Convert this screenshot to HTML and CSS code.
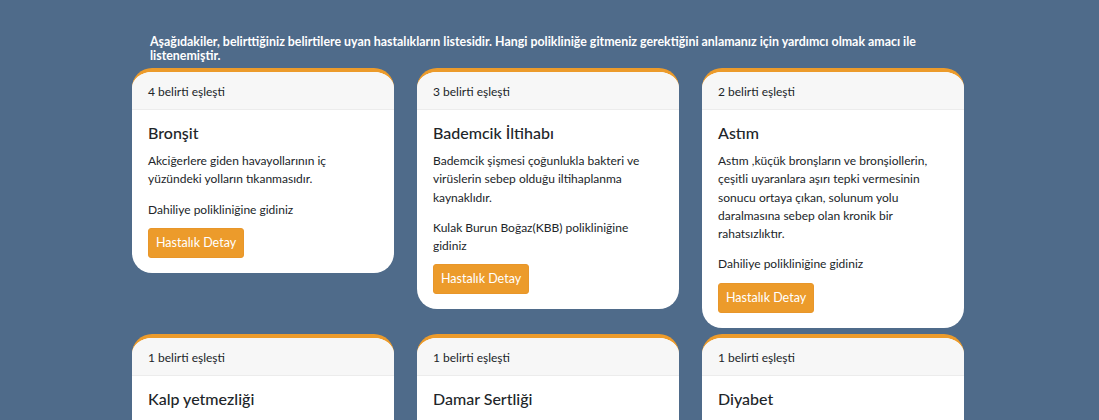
FILE: index.html
```html
<!DOCTYPE html>
<html lang="tr">
<head>
<meta charset="utf-8">
<title>Hastalıklar</title>
<link rel="stylesheet" href="styles.css">
</head>
<body>
<main class="page">
  <p class="intro">Aşağıdakiler, belirttiğiniz belirtilere uyan hastalıkların listesidir. Hangi polikliniğe gitmeniz gerektiğini anlamanız için yardımcı olmak amacı ile listenemiştir.</p>
  <div class="grid">
    <div class="card">
      <div class="card-header">4 belirti eşleşti</div>
      <div class="card-body">
        <h5 class="card-title">Bronşit</h5>
        <p class="card-text">Akciğerlere giden havayollarının iç yüzündeki yolların tıkanmasıdır.</p>
        <p class="card-text card-last">Dahiliye polikliniğine gidiniz</p>
        <a class="btn">Hastalık Detay</a>
      </div>
    </div>
    <div class="card">
      <div class="card-header">3 belirti eşleşti</div>
      <div class="card-body">
        <h5 class="card-title">Bademcik İltihabı</h5>
        <p class="card-text">Bademcik şişmesi çoğunlukla bakteri ve virüslerin sebep olduğu iltihaplanma kaynaklıdır.</p>
        <p class="card-text card-last">Kulak Burun Boğaz(KBB) polikliniğine gidiniz</p>
        <a class="btn">Hastalık Detay</a>
      </div>
    </div>
    <div class="card">
      <div class="card-header">2 belirti eşleşti</div>
      <div class="card-body">
        <h5 class="card-title">Astım</h5>
        <p class="card-text">Astım ,küçük bronşların ve bronşiollerin, çeşitli uyaranlara aşırı tepki vermesinin sonucu ortaya çıkan, solunum yolu daralmasına sebep olan kronik bir rahatsızlıktır.</p>
        <p class="card-text card-last">Dahiliye polikliniğine gidiniz</p>
        <a class="btn">Hastalık Detay</a>
      </div>
    </div>
    <div class="card">
      <div class="card-header">1 belirti eşleşti</div>
      <div class="card-body">
        <h5 class="card-title">Kalp yetmezliği</h5>
        <p class="card-text">Kalbin vücudun ihtiyacı olan kanı yeterince pompalayamamasıdır.</p>
        <p class="card-text card-last">Kardiyoloji polikliniğine gidiniz</p>
        <a class="btn">Hastalık Detay</a>
      </div>
    </div>
    <div class="card">
      <div class="card-header">1 belirti eşleşti</div>
      <div class="card-body">
        <h5 class="card-title">Damar Sertliği</h5>
        <p class="card-text">Atardamar duvarlarının kalınlaşarak esnekliğini kaybetmesidir.</p>
        <p class="card-text card-last">Kardiyoloji polikliniğine gidiniz</p>
        <a class="btn">Hastalık Detay</a>
      </div>
    </div>
    <div class="card">
      <div class="card-header">1 belirti eşleşti</div>
      <div class="card-body">
        <h5 class="card-title">Diyabet</h5>
        <p class="card-text">Kandaki şeker seviyesinin normalin üzerine çıkmasıdır.</p>
        <p class="card-text card-last">Dahiliye polikliniğine gidiniz</p>
        <a class="btn">Hastalık Detay</a>
      </div>
    </div>
  </div>
</main>
</body>
</html>
```

FILE: styles.css
```css
html, body {
  margin: 0;
  padding: 0;
}
body {
  background: #4f6b8a;
  font-family: Lato, "Noto Sans", sans-serif;
  color: #212529;
}
.page {
  width: 831px;
  margin-left: 132px;
  padding-top: 35px;
}
.intro {
  margin: 0 0 5px 0;
  padding-left: 18px;
  padding-right: 30px;
  color: #ffffff;
  font-weight: 700;
  font-size: 12.4px;
  line-height: 14px;
}
.grid {
  display: grid;
  grid-template-columns: repeat(3, 262px);
  column-gap: 23px;
  row-gap: 6px;
  align-items: start;
}
.card {
  background: #ffffff;
  border-top: 4px solid #ec9b2b;
  border-radius: 20px;
  overflow: hidden;
}
.card-header {
  background: #f7f7f7;
  border-bottom: 1px solid #ececec;
  padding: 11px 16px 8px;
  font-size: 12px;
  line-height: 18px;
}
.card-body {
  padding: 13px 16px 15px;
}
.card-title {
  margin: 0 0 10px 0;
  font-size: 16px;
  font-weight: 500;
  line-height: 19px;
}
.card-text {
  margin: 0 0 12px 0;
  font-size: 12px;
  line-height: 18.3px;
}
.card-last {
  margin-bottom: 9px;
}
.btn {
  display: inline-block;
  background: #ec9b2b;
  color: #ffffff;
  font-size: 12.5px;
  line-height: 18px;
  padding: 5px 7px;
  border-radius: 3px;
  border: 1px solid #e8962a;
}
```
